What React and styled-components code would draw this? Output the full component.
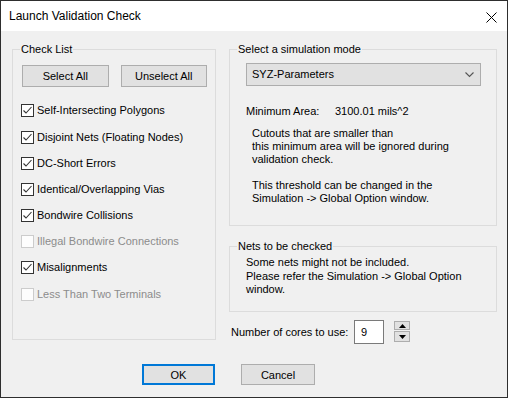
import React from "react";
import styled, { createGlobalStyle } from "styled-components";

const Global = createGlobalStyle`
  html, body { margin: 0; padding: 0; background: #f0f0f0; }
  body { font-family: "Liberation Sans", Arial, sans-serif; font-size: 11px; color: #000; }
  * { box-sizing: border-box; }
`;

const Window = styled.div`
  width: 508px;
  height: 398px;
  border: 1px solid #2e2e2e;
  background: #f0f0f0;
  display: flex;
  flex-direction: column;
  overflow: hidden;
`;

const TitleBar = styled.div`
  height: 30px;
  background: #fff;
  display: flex;
  align-items: center;
  justify-content: space-between;
  padding: 0 9px 0 8px;
  flex: none;
`;

const Title = styled.span`
  font-size: 12px;
  line-height: 14px;
  color: #000;
`;

const CloseIcon = styled.svg`
  width: 11px;
  height: 11px;
  margin-right: 1px;
  margin-top: 2px;
`;

const Body = styled.div`
  padding: 12px 10px 0 11px;
  display: grid;
  grid-template-columns: 204px 268px;
  column-gap: 13px;
  align-items: start;
`;

const Group = styled.fieldset`
  margin: 0;
  padding: 0;
  border: 1px solid #dcdcdc;
  height: ${(p) => p.$h}px;
  min-width: 0;
  margin-top: ${(p) => p.$mt || 0}px;
`;

const Legend = styled.legend`
  margin-left: 7px;
  padding: 0 1px;
  line-height: 13px;
  font-size: 11px;
`;

const GroupContent = styled.div`
  padding: ${(p) => p.$pad};
  display: flex;
  flex-direction: column;
`;

const Column = styled.div`
  display: flex;
  flex-direction: column;
`;

const ButtonRow = styled.div`
  display: flex;
  gap: 12px;
  margin-left: 1px;
`;

const Button = styled.button`
  width: ${(p) => p.$w || 88}px;
  height: ${(p) => p.$h || 22}px;
  background: #e1e1e1;
  border: ${(p) => (p.$default ? "2px solid #0078d7" : "1px solid #adadad")};
  font-family: "Liberation Sans", Arial, sans-serif;
  font-size: 11px;
  color: #000;
  padding: 0;
  border-radius: 0;
`;

const CheckList = styled.div`
  display: flex;
  flex-direction: column;
  margin-top: 10px;
`;

const CheckRow = styled.label`
  height: 26px;
  display: flex;
  align-items: center;
  gap: 3px;
  color: ${(p) => (p.$disabled ? "#8c8c8c" : "#000")};
  line-height: 13px;
  margin-top: ${(p) => p.$mt || 0}px;
`;

const Box = styled.span`
  width: 13px;
  height: 13px;
  border: 1px solid ${(p) => (p.$disabled ? "#cccccc" : "#333")};
  background: ${(p) => (p.$disabled ? "#fdfdfd" : "#fff")};
  display: flex;
  align-items: center;
  justify-content: center;
  flex: none;
`;

const Select = styled.div`
  margin-top: 7px;
  width: 235px;
  height: 23px;
  background: #e1e1e1;
  border: 1px solid #adadad;
  display: flex;
  align-items: center;
  justify-content: space-between;
  padding: 0 6px 0 5px;
  line-height: 13px;
`;

const InfoRow = styled.div`
  display: flex;
  margin-top: 19px;
  line-height: 13px;
`;

const InfoLabel = styled.span`
  width: 89px;
`;

const Note = styled.div`
  margin-left: 6px;
  margin-top: ${(p) => p.$mt}px;
  line-height: 13px;
`;

const NetsText = styled.div`
  margin-top: 3px;
  line-height: 13.5px;
`;

const CoresRow = styled.div`
  display: flex;
  align-items: center;
  margin-top: 8px;
  padding-left: 2px;
`;

const CoresLabel = styled.span`
  width: 123px;
  line-height: 13px;
`;

const NumberBox = styled.div`
  width: 30px;
  height: 24px;
  background: #fff;
  border: 1px solid #7a7a7a;
  padding: 0 0 0 6px;
  display: flex;
  align-items: center;
  line-height: 13px;
`;

const Spinner = styled.div`
  display: flex;
  flex-direction: column;
  gap: 1px;
  margin-left: 10px;
  margin-top: -1px;
`;

const SpinButton = styled.div`
  width: 16px;
  height: ${(p) => p.$h}px;
  background: #e1e1e1;
  border: 1px solid #adadad;
  display: flex;
  align-items: center;
  justify-content: center;
`;

const Footer = styled.div`
  display: flex;
  gap: 26px;
  padding-left: 141px;
  margin-top: 20px;
`;

const Check = () => (
  <svg width="11" height="11" viewBox="0 0 11 11">
    <path d="M1.5 5.5 L4 8 L9.5 2" fill="none" stroke="#333" strokeWidth="1.1" />
  </svg>
);

const items = [
  ["Self-Intersecting Polygons", true, false],
  ["Disjoint Nets (Floating Nodes)", true, false],
  ["DC-Short Errors", true, false],
  ["Identical/Overlapping Vias", true, false],
  ["Bondwire Collisions", true, false],
  ["Illegal Bondwire Connections", false, true],
  ["Misalignments", true, false],
  ["Less Than Two Terminals", false, true],
];

export default function App() {
  return (
    <>
      <Global />
      <Window>
        <TitleBar>
          <Title>Launch Validation Check</Title>
          <CloseIcon viewBox="0 0 11 11">
            <path d="M0.5 0.5 L10.5 10.5 M10.5 0.5 L0.5 10.5" stroke="#000" strokeWidth="1" />
          </CloseIcon>
        </TitleBar>
        <Body>
          <Group $h={297}>
            <Legend>Check List</Legend>
            <GroupContent $pad="9px 8px 0 8px">
              <ButtonRow>
                <Button>Select All</Button>
                <Button>Unselect All</Button>
              </ButtonRow>
              <CheckList>
                {items.map(([label, checked, disabled], i) => (
                  <CheckRow key={label} $disabled={disabled} $mt={i === 7 || i === 1 ? 1 : 0}>
                    <Box $disabled={disabled}>{checked && <Check />}</Box>
                    {label}
                  </CheckRow>
                ))}
              </CheckList>
            </GroupContent>
          </Group>
          <Column>
            <Group $h={183}>
              <Legend>Select a simulation mode</Legend>
              <GroupContent $pad="0 0 0 16px">
                <Select>
                  <span>SYZ-Parameters</span>
                  <svg width="9" height="6" viewBox="0 0 9 6">
                    <path d="M0.5 0.5 L4.5 4.5 L8.5 0.5" fill="none" stroke="#555" strokeWidth="1.1" />
                  </svg>
                </Select>
                <InfoRow>
                  <InfoLabel>Minimum Area:</InfoLabel>
                  <span>3100.01 mils^2</span>
                </InfoRow>
                <Note $mt={9}>
                  Cutouts that are smaller than
                  <br />
                  this minimum area will be ignored during
                  <br />
                  validation check.
                </Note>
                <Note $mt={13}>
                  This threshold can be changed in the
                  <br />
                  Simulation -&gt; Global Option window.
                </Note>
              </GroupContent>
            </Group>
            <Group $h={72} $mt={14}>
              <Legend>Nets to be checked</Legend>
              <GroupContent $pad="0 0 0 16px">
                <NetsText>
                  Some nets might not be included.
                  <br />
                  Please refer the Simulation -&gt; Global Option
                  <br />
                  window.
                </NetsText>
              </GroupContent>
            </Group>
            <CoresRow>
              <CoresLabel>Number of cores to use:</CoresLabel>
              <NumberBox>9</NumberBox>
              <Spinner>
                <SpinButton $h={9}>
                  <svg width="7" height="4" viewBox="0 0 7 4">
                    <path d="M0 4 L3.5 0 L7 4 Z" fill="#000" />
                  </svg>
                </SpinButton>
                <SpinButton $h={11}>
                  <svg width="7" height="4" viewBox="0 0 7 4">
                    <path d="M0 0 L3.5 4 L7 0 Z" fill="#000" />
                  </svg>
                </SpinButton>
              </Spinner>
            </CoresRow>
          </Column>
        </Body>
        <Footer>
          <Button $w={73} $h={21} $default>OK</Button>
          <Button $w={74} $h={21}>Cancel</Button>
        </Footer>
      </Window>
    </>
  );
}
